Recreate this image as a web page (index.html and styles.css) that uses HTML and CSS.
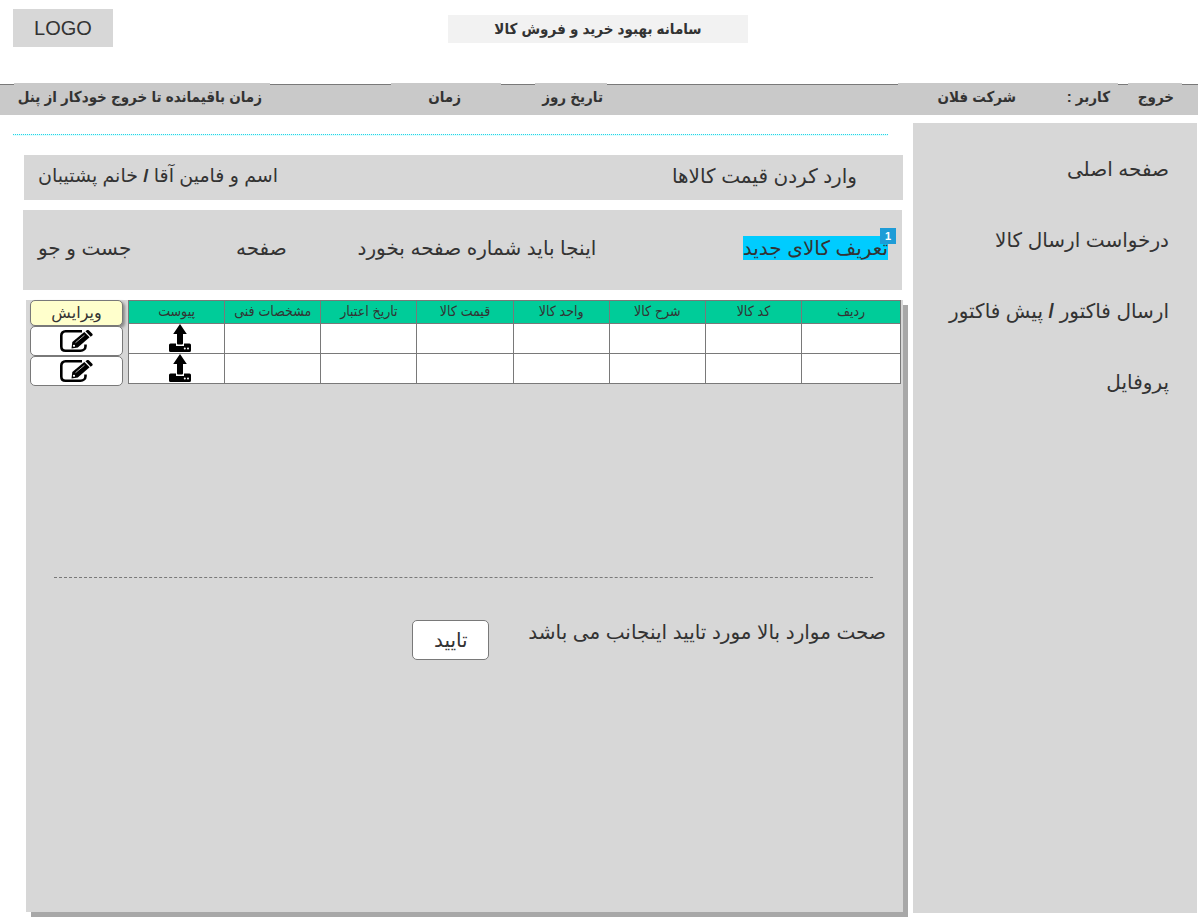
FILE: index.html
```html
<!DOCTYPE html>
<html lang="fa" dir="rtl">
<head>
<meta charset="utf-8">
<title>سامانه بهبود خرید و فروش کالا</title>
<link rel="stylesheet" href="styles.css">
</head>
<body>
<svg class="sprite" width="0" height="0" aria-hidden="true">
  <symbol id="icon-edit" viewBox="0 0 33 22">
    <path d="M22 1.300H5.500C3 1.300 1.300 3 1.300 5.500v11C1.300 19 3 20.700 5.500 20.700H20.500c2.800 0 5-2 5-4.500v-1.700" fill="none" stroke="#000" stroke-width="2.600"/>
    <path d="M11.500 18.400l.8-6.400L24.300 1.900l5.300 5.300L17.800 17.400z"/>
    <path d="M25.500 1.200l1.300-1c.6-.5 1.400-.4 2 .1l3.500 3.400c.5.6.5 1.300 0 1.800l-1.600 1.200z"/>
    <path d="M15.500 12.700l9-7.500" stroke="#fff" stroke-width=".7"/>
    <circle cx="14" cy="15.800" r="1.100" fill="#fff"/>
  </symbol>
  <symbol id="icon-upload" viewBox="0 0 22 28">
    <path d="M1.500 19.500h5.500v2.500h8v-2.500h5.500q1.500 0 1.500 1.500V26.500q0 1.500-1.500 1.500H1.500q-1.500 0-1.500-1.500V21q0-1.500 1.500-1.500z"/>
    <path d="M11 0l6.800 10H14v9.500q0 1-1 1H9q-1 0-1-1V10H4.200z"/>
    <circle cx="15.800" cy="24.500" r="1" fill="#fff"/>
    <circle cx="19" cy="24.500" r="1" fill="#fff"/>
  </symbol>
</svg>

<header class="masthead">
  <div class="logo" dir="ltr">LOGO</div>
  <h1 class="site-title">سامانه بهبود خرید و فروش کالا</h1>
</header>

<nav class="status-bar">
  <a class="status exit" href="#">خروج</a>
  <div class="status user"><span>کاربر :</span><span>شرکت فلان</span></div>
  <div class="status date">تاریخ روز</div>
  <div class="status time">زمان</div>
  <div class="status session">زمان باقیمانده تا خروج خودکار از پنل</div>
</nav>

<div class="layout">
  <aside class="sidebar">
    <a href="#">صفحه اصلی</a>
    <a href="#">درخواست ارسال کالا</a>
    <a href="#">ارسال فاکتور <b>/</b> پیش فاکتور</a>
    <a href="#">پروفایل</a>
  </aside>

  <main class="main">
    <hr class="divider">
    <section class="heading">
      <h2>وارد کردن قیمت کالاها</h2>
      <p>اسم و فامین آقا <b>/</b> خانم پشتیبان</p>
    </section>
    <section class="toolbar">
      <div><a class="new-item" href="#">تعریف کالای جدید<span class="badge">1</span></a></div>
      <span>اینجا باید شماره صفحه بخورد</span>
      <span>صفحه</span>
      <button class="search" type="button">جست و جو</button>
    </section>

    <section class="panel">
      <div class="records">
        <table class="goods">
          <thead>
            <tr><th class="row-number">ردیف</th><th>کد کالا</th><th>شرح کالا</th><th>واحد کالا</th><th>قیمت کالا</th><th>تاریخ اعتبار</th><th>مشخصات فنی</th><th>پیوست</th></tr>
          </thead>
          <tbody>
            <tr><td></td><td></td><td></td><td></td><td></td><td></td><td></td><td class="attachment"><button class="upload" type="button" aria-label="پیوست"><svg><use href="#icon-upload"/></svg></button></td></tr>
            <tr><td></td><td></td><td></td><td></td><td></td><td></td><td></td><td class="attachment"><button class="upload" type="button" aria-label="پیوست"><svg><use href="#icon-upload"/></svg></button></td></tr>
          </tbody>
        </table>
        <div class="edit-column">
          <div class="edit-title">ویرایش</div>
          <button class="edit" type="button" aria-label="ویرایش"><svg><use href="#icon-edit"/></svg></button>
          <button class="edit" type="button" aria-label="ویرایش"><svg><use href="#icon-edit"/></svg></button>
        </div>
      </div>
      <hr class="rule">
      <div class="confirmation">
        <p>صحت موارد بالا مورد تایید اینجانب می باشد</p>
        <button class="confirm" type="button">تایید</button>
      </div>
    </section>
  </main>
</div>
</body>
</html>
```
FILE: styles.css
```css
* {
  box-sizing: border-box;
}

body {
  display: flex;
  flex-direction: column;
  min-height: 100vh;
  margin: 0;
  background: #fff;
  color: #333;
  font-family: "Liberation Sans", "DejaVu Sans", sans-serif;
  font-size: 20px;
  line-height: 24px;
}

h1, h2, p {
  margin: 0;
  font-size: inherit;
  font-weight: inherit;
}

a {
  color: inherit;
  text-decoration: none;
}

button {
  padding: 0;
  border: 0;
  background: none;
  color: inherit;
  font: inherit;
}

.sprite {
  position: absolute;
}

/* Masthead */
.masthead {
  display: grid;
  grid-template-columns: 1fr 300px 1fr;
  align-items: start;
  height: 84px;
  padding: 9px 17px 0 13px;
}

.logo {
  grid-column: 3;
  grid-row: 1;
  justify-self: end;
  width: 100px;
  background: #d7d7d7;
  line-height: 38px;
  text-align: center;
}

.site-title {
  grid-column: 2;
  grid-row: 1;
  margin-top: 6px;
  background: #f2f2f2;
  font-family: "Liberation Sans", "DejaVu Sans Condensed", "DejaVu Sans", sans-serif;
  font-size: 15px;
  font-weight: bold;
  line-height: 28px;
  text-align: center;
}

/* Status bar */
.status-bar {
  display: flex;
  height: 31px;
  margin-right: 2px;
  padding: 0 16px 0 14px;
  border-top: 1px solid #797979;
  background: #c9c9c9;
  font-family: "Liberation Sans", "DejaVu Sans Condensed", "DejaVu Sans", sans-serif;
  font-size: 15px;
  font-weight: bold;
  line-height: 28px;
  white-space: nowrap;
}

.status {
  margin-top: -2px;
  padding-right: 8px;
  background: #c9c9c9;
}

.exit {
  width: 54px;
}

.user {
  display: grid;
  grid-template-columns: 94px 1fr;
  width: 220px;
  margin-right: 10px;
}

.date {
  width: 72px;
  margin-right: auto;
  padding-right: 4px;
}

.time {
  width: 110px;
  margin-right: 34px;
  padding-right: 40px;
}

.session {
  width: 256px;
  margin-right: 121px;
}

/* Page body */
.layout {
  display: grid;
  flex: 1;
  grid-template-columns: 284px 1fr;
  gap: 10px;
  padding: 8px 3px 7px 23px;
}

.sidebar {
  display: flex;
  flex-direction: column;
  gap: 47px;
  padding: 34px 28px;
  background: #d7d7d7;
}

.main {
  display: flex;
  flex-direction: column;
}

.divider {
  height: 2px;
  margin: 11px 15px 0 -10px;
  border: 0;
  border-top: 1px dotted #28d2e6;
  background: #e0ffff;
}

.heading {
  display: flex;
  align-items: center;
  justify-content: space-between;
  height: 45px;
  margin: 19px 0 10px 1px;
  padding: 0 46px 4px 14px;
  background: #d7d7d7;
}

.heading p {
  font-size: 19px;
}

.toolbar {
  display: grid;
  grid-template-columns: 293fr 311fr 156fr 90fr;
  align-items: center;
  height: 80px;
  margin-right: 1px;
  padding: 0 14px 4px 15px;
  background: #d7d7d7;
  white-space: nowrap;
}

.search {
  justify-self: end;
}

.new-item {
  position: relative;
  display: inline-block;
  background: #0cf;
}

.badge {
  position: absolute;
  top: -8px;
  right: -8px;
  width: 16px;
  height: 16px;
  background: #1e9cd7;
  color: #fff;
  font-size: 11px;
  font-weight: bold;
  line-height: 16px;
  text-align: center;
}

.panel {
  flex: 1;
  margin: 10px 0 1px 3px;
  background: #d7d7d7;
  box-shadow: 5px 5px 0 #a8a8a8;
}

.records {
  display: grid;
  grid-template-columns: 1fr 93px;
  gap: 5px;
  align-items: start;
  padding: 0 2px 0 4px;
}

.goods {
  width: 100%;
  border-collapse: collapse;
  table-layout: fixed;
  background: #fff;
}

.goods th,
.goods td {
  height: 30px;
  padding: 0;
  border: 1px solid #797979;
  vertical-align: top;
}

.goods th {
  height: 23px;
  background: #0c9;
  font-family: "Liberation Sans", "DejaVu Sans Condensed", "DejaVu Sans", sans-serif;
  font-size: 14px;
  font-weight: normal;
  line-height: 20px;
  white-space: nowrap;
}

.goods .row-number {
  width: 99px;
}

.goods .attachment {
  padding-left: 6px;
}

.upload {
  display: block;
  margin: 0 auto;
}

.upload svg {
  display: block;
  width: 22px;
  height: 28px;
}

.edit-title {
  height: 26px;
  border: 1px solid #797979;
  border-radius: 5px;
  background: #ffc;
  box-shadow: 2px 2px 3px #888;
  font-size: 16px;
  text-align: center;
}

.edit {
  position: relative;
  display: grid;
  place-items: center;
  width: 100%;
  height: 30px;
  border: 1px solid #797979;
  border-radius: 5px;
  background: #fff;
}

.edit svg {
  width: 33px;
  height: 22px;
}

.rule {
  margin: 191px 30px 0 28px;
  border: 0;
  border-top: 1px dashed #797979;
}

.confirmation {
  display: flex;
  gap: 39px;
  padding: 42px 17px 0;
}

.confirm {
  width: 77px;
  height: 40px;
  border: 1px solid #797979;
  border-radius: 5px;
  background: #fff;
}
```
